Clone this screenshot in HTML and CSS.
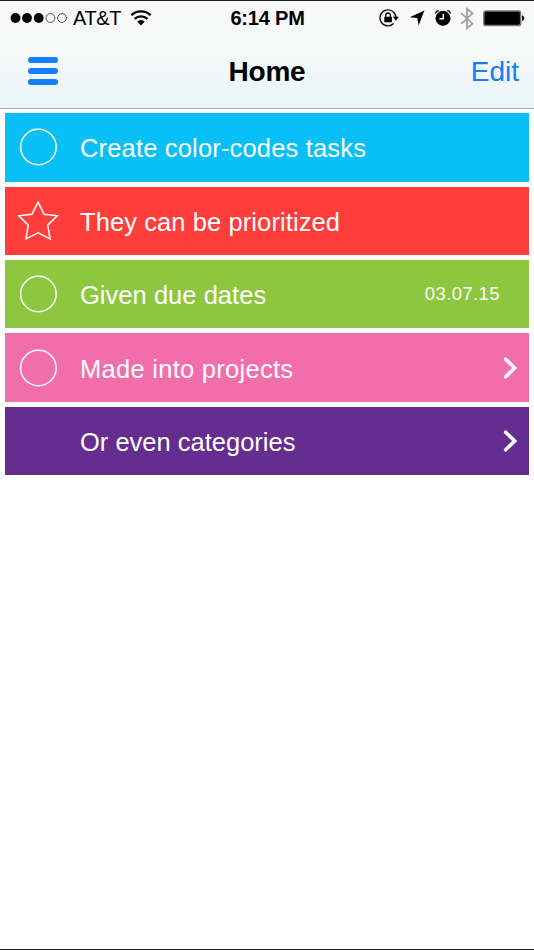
FILE: index.html
```html
<!DOCTYPE html>
<html lang="en">

<head>
    <meta charset="UTF-8">
    <meta name="viewport" content="width=device-width, initial-scale=1.0">
    <title>Home</title>
    <link rel="stylesheet" href="styles.css">
</head>

<body>
    <div class="phone">
        <header class="top">
            <div class="status">
                <div class="status-left">
                    <svg class="signal" width="58" height="12" viewBox="0 0 58 12">
                        <circle cx="5.5" cy="6" r="4.9"/>
                        <circle cx="17" cy="6" r="4.9"/>
                        <circle cx="28.7" cy="6" r="4.9"/>
                        <circle class="empty" cx="40.4" cy="6" r="4.4"/>
                        <circle class="empty" cx="52" cy="6" r="4.4"/>
                    </svg>
                    <span class="carrier">AT&amp;T</span>
                    <svg class="wifi" width="22" height="16" viewBox="0 0 22 16">
                        <path d="M1.4 5.2a14 14 0 0 1 19.2 0M4.6 8.9a9.2 9.2 0 0 1 12.8 0" fill="none" stroke="#000" stroke-width="2.3"/>
                        <path d="M7.2 11.6a5.5 5.5 0 0 1 7.6 0L11 15.4z"/>
                    </svg>
                </div>
                <span class="time">6:14 PM</span>
                <div class="status-right">
                    <svg width="20" height="20" viewBox="0 0 20 20">
                        <path d="M14.6 15.6a8 8 0 1 1 2.4-5.9" fill="none" stroke="#111" stroke-width="1.4"/>
                        <path d="M13.9 8.8h6l-3 4z"/>
                        <rect x="5.3" y="8.7" width="7.6" height="5.6" rx=".5"/>
                        <path d="M6.8 9V7.3a2.3 2.3 0 0 1 4.6 0V9" fill="none" stroke="#000" stroke-width="1.3"/>
                    </svg>
                    <svg class="location" width="16" height="16" viewBox="0 0 16 16">
                        <path d="M15.4.6L9.6 15.6 8.3 8 .6 7.3z"/>
                    </svg>
                    <svg class="alarm" width="18" height="18" viewBox="0 0 18 18">
                        <circle cx="9" cy="9.3" r="7.5"/>
                        <path d="M1.3 4.4Q2.2 2 4.7 1.5M16.7 4.4Q15.8 2 13.3 1.5" fill="none" stroke="#111" stroke-width="1.3"/>
                        <path d="M9.3 4.8v4.9H5.5" fill="none" stroke="#fff" stroke-width="1.4"/>
                    </svg>
                    <svg class="bluetooth" width="14" height="23" viewBox="0 0 14 23">
                        <path d="M1.2 6.2l11.3 10.4L7 21.2V1.8l5.5 4.6L1.2 16.8" fill="none" stroke="#a0a0a0" stroke-width="1.8"/>
                    </svg>
                    <svg class="battery" width="42" height="17" viewBox="0 0 42 17">
                        <rect x=".8" y=".9" width="36.8" height="14.7" rx="2.2" fill="#000" stroke="#777" stroke-width="1.5"/>
                        <path d="M39 5.3q2.2.6 2.2 2.9T39 11.1z"/>
                    </svg>
                </div>
            </div>
            <nav class="navbar">
                <div class="menu">
                    <span></span>
                    <span></span>
                    <span></span>
                </div>
                <h1>Home</h1>
                <a class="edit">Edit</a>
            </nav>
        </header>

        <ul class="tasks">
            <li class="task blue">
                <div class="mark">
                    <svg class="circle" width="38" height="38" viewBox="0 0 38 38">
                        <circle cx="19.4" cy="19" r="17.8"/>
                    </svg>
                </div>
                <span class="label create">Create color-codes tasks</span>
            </li>
            <li class="task red">
                <div class="mark">
                    <svg class="star" width="42" height="42" viewBox="0 0 42 42">
                        <path d="M21.1 2.2l5.9 12 13.3 1.6-9.6 9.3 2.4 13.7-12-6-12.1 6 2.2-13.7L1.8 15.8l13.2-1.6z"/>
                    </svg>
                </div>
                <span class="label they">They can be prioritized</span>
            </li>
            <li class="task green">
                <div class="mark">
                    <svg class="circle" width="38" height="38" viewBox="0 0 38 38">
                        <circle cx="19.4" cy="19" r="17.8"/>
                    </svg>
                </div>
                <span class="label given">Given due dates</span>
                <span class="date">03.07.15</span>
            </li>
            <li class="task pink">
                <div class="mark">
                    <svg class="circle" width="38" height="38" viewBox="0 0 38 38">
                        <circle cx="19.4" cy="19" r="17.8"/>
                    </svg>
                </div>
                <span class="label made">Made into projects</span>
                <svg class="arrow" width="15" height="24" viewBox="0 0 15 24">
                    <path d="M2.7 3.2l9 8.8-9 8.8"/>
                </svg>
            </li>
            <li class="task purple">
                <div class="mark"></div>
                <span class="label even">Or even categories</span>
                <svg class="arrow" width="15" height="24" viewBox="0 0 15 24">
                    <path d="M2.7 3.2l9 8.8-9 8.8"/>
                </svg>
            </li>
        </ul>
    </div>
</body>

</html>
```
FILE: styles.css
```css
* {
    box-sizing: border-box;
}

body {
    margin: 0;
    background-color: white;
    font-family: "Liberation Sans", Arial, sans-serif;
}

.phone {
    height: 950px;
    border-top: 1px solid #231f20;
    border-bottom: 1px solid #231f20;
    overflow: hidden;
}

/* status bar + nav bar */
.top {
    height: 108px;
    background: linear-gradient(#f8f8f8 0%, #f7f9f9 45%, #eaf5fa 100%);
    border-bottom: 1px solid #a9abad;
}

.status {
    display: grid;
    grid-template-columns: 1fr auto 1fr;
    align-items: center;
    height: 34px;
    padding: 0 9px 0 10px;
}

.status-left,
.status-right {
    display: flex;
    align-items: center;
}

.status-right {
    justify-content: flex-end;
}

.signal .empty {
    fill: none;
    stroke: #555;
    stroke-width: 1;
}

.carrier {
    margin-left: 5px;
    font-size: 20px;
    letter-spacing: -0.4px;
}

.wifi {
    margin: -1px 0 0 9px;
}

.time {
    font-size: 20px;
    font-weight: bold;
    letter-spacing: -0.2px;
}

.location {
    margin-left: 10px;
}

.alarm {
    margin-left: 9px;
}

.bluetooth {
    margin-left: 8px;
}

.battery {
    margin-left: 9px;
}

.navbar {
    display: grid;
    grid-template-columns: 1fr auto 1fr;
    align-items: center;
    height: 73px;
    padding: 0 15px;
}

.menu {
    display: flex;
    flex-direction: column;
    gap: 5px;
    width: 30px;
    margin: 0 0 2px 13px;
}

.menu span {
    height: 6px;
    border-radius: 3px;
    background-color: #147efb;
}

h1 {
    margin: 0;
    font-size: 28px;
    letter-spacing: -0.2px;
}

.edit {
    justify-self: end;
    color: #147efb;
    font-size: 28px;
}

/* task list */
.tasks {
    display: flex;
    flex-direction: column;
    gap: 5px;
    margin: 0;
    padding: 4.2px 5px 0;
    list-style: none;
}

.task {
    display: flex;
    align-items: center;
    height: 68.4px;
    color: white;
}

.mark {
    display: flex;
    justify-content: center;
    width: 66px;
    margin-right: 9px;
}

.circle,
.star {
    fill: none;
    stroke: white;
    stroke-width: 1.5;
}

.label {
    flex: 1;
    padding-top: 3px;
    font-size: 25.5px;
}

.create {
    letter-spacing: 0.17px;
}

.they {
    letter-spacing: 0.09px;
}

.given {
    letter-spacing: 0.03px;
}

.made {
    letter-spacing: 0.28px;
}

.date {
    margin-right: 29px;
    font-size: 18.5px;
    letter-spacing: 0.4px;
}

.arrow {
    margin-right: 11px;
    fill: none;
    stroke: white;
    stroke-width: 3.6;
    stroke-linecap: round;
}

.blue {
    background-color: #08c0f5;
}

.red {
    background-color: #ff3e3b;
}

.green {
    background-color: #8dc73f;
}

.pink {
    background-color: #f26eaa;
}

.purple {
    background-color: #652d90;
}
```
